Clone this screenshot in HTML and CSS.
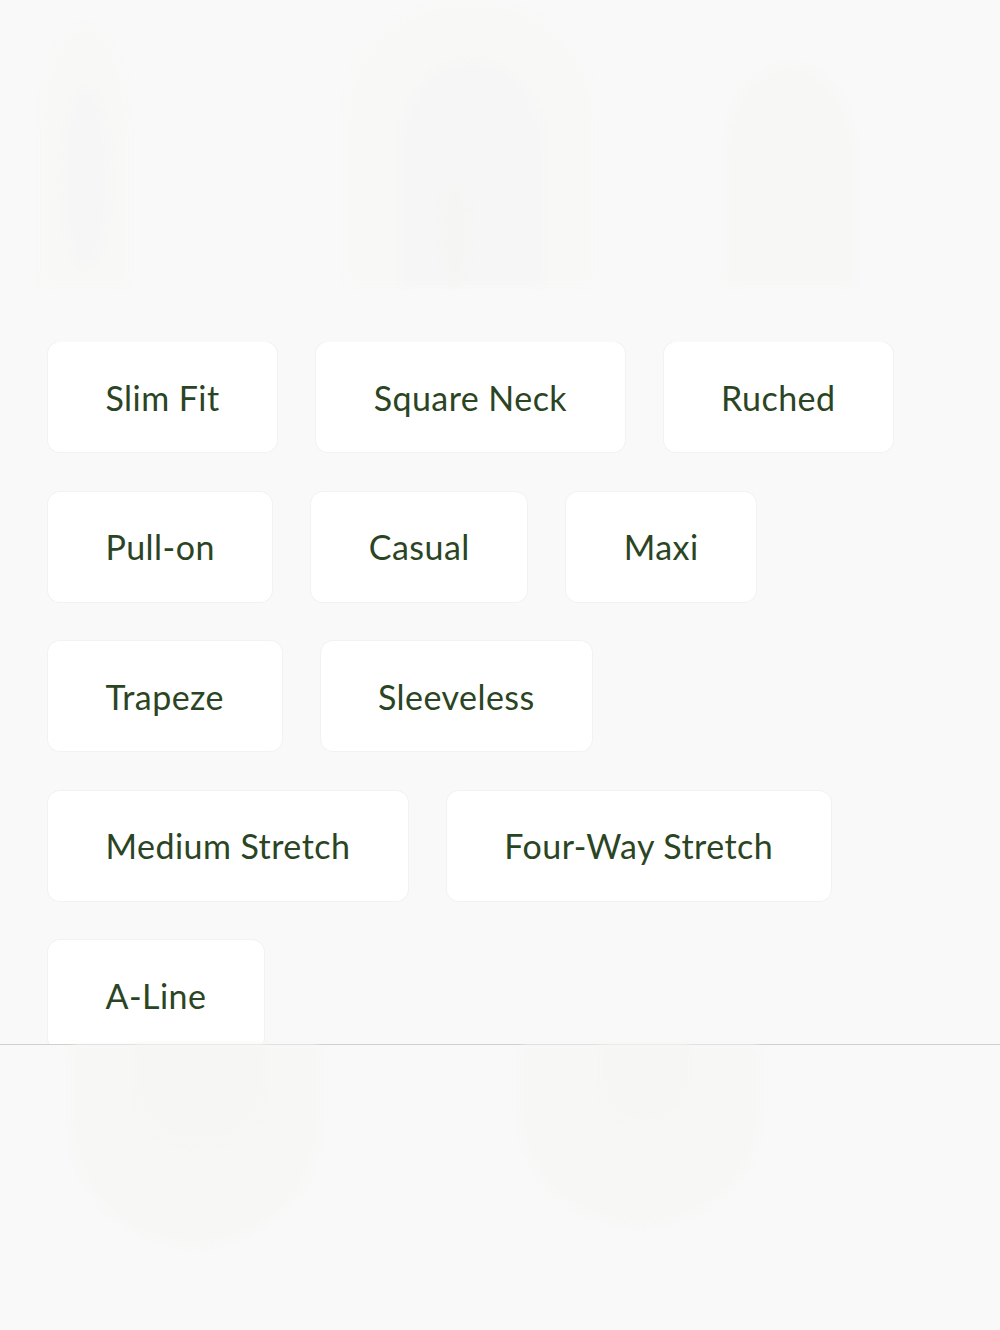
FILE: index.html
```html
<!DOCTYPE html>
<html lang="en">
<head>
<meta charset="utf-8">
<title>Attributes</title>
<link rel="stylesheet" href="styles.css">
</head>
<body>
<div class="page">
  <div class="hero">
    <div class="ghost g1"></div>
    <div class="ghost g2"></div>
    <div class="ghost g3"></div>
    <div class="ghost g4"></div>
    <div class="ghost g5"></div>
    <div class="ghost g6"></div>
  </div>
  <div class="sheet">
    <ul class="chips">
      <li class="chip">Slim Fit</li>
      <li class="chip">Square Neck</li>
      <li class="chip">Ruched</li>
      <li class="chip">Pull-on</li>
      <li class="chip">Casual</li>
      <li class="chip">Maxi</li>
      <li class="chip">Trapeze</li>
      <li class="chip">Sleeveless</li>
      <li class="chip">Medium Stretch</li>
      <li class="chip">Four-Way Stretch</li>
      <li class="chip">A-Line</li>
    </ul>
  </div>
  <div class="footer">
    <div class="ghost f1"></div>
    <div class="ghost f2"></div>
    <div class="ghost f3"></div>
    <div class="ghost f4"></div>
  </div>
</div>
</body>
</html>
```

FILE: styles.css
```css
* { box-sizing: border-box; }
html, body { margin: 0; padding: 0; }
body {
  background: #f9f9f9;
  font-family: Lato, "Open Sans", sans-serif;
}
.page {
  width: 1000px;
  height: 1330px;
  display: flex;
  flex-direction: column;
  overflow: hidden;
}
.hero {
  position: relative;
  height: 342px;
  flex: none;
}
.ghost {
  position: absolute;
  border-radius: 50% 50% 8px 8px / 40% 40% 8px 8px;
  filter: blur(3px);
}
.g1 { left: 40px; top: 25px; width: 90px; height: 260px; background: #f8f8f7; }
.g2 { left: 62px; top: 88px; width: 48px; height: 180px; background: #f6f6f6; border-radius: 50%; }
.g3 { left: 345px; top: 0; width: 250px; height: 285px; background: #f8f8f7; }
.g4 { left: 400px; top: 60px; width: 145px; height: 225px; background: #f6f6f6; }
.g5 { left: 440px; top: 180px; width: 30px; height: 105px; background: #f5f5f4; border-radius: 50%; }
.g6 { left: 725px; top: 65px; width: 130px; height: 220px; background: #f7f7f6; }
.sheet {
  height: 702px;
  flex: none;
  overflow: hidden;
  padding: 0 48px;
}
.chips {
  list-style: none;
  margin: 0;
  padding: 0;
  display: flex;
  flex-wrap: wrap;
  gap: 39.5px 39px;
}
.chip {
  height: 110px;
  padding: 0 57.5px;
  display: flex;
  align-items: center;
  background: #ffffff;
  border-radius: 12px;
  box-shadow: 0 0 0 1px #f2f2f2;
  color: #2b4524;
  font-size: 34px;
  letter-spacing: 0.45px;
  white-space: nowrap;
}
.footer {
  position: relative;
  flex: 1;
  border-top: 1px solid #cfcfcf;
}
.f1 { left: 70px; top: 0; width: 250px; height: 200px; background: #f7f7f6; border-radius: 8px 8px 50% 50% / 8px 8px 60% 60%; }
.f2 { left: 135px; top: 0; width: 130px; height: 100px; background: #f6f6f5; border-radius: 0 0 50% 50%; }
.f3 { left: 520px; top: 0; width: 240px; height: 180px; background: #f7f7f6; border-radius: 8px 8px 50% 50% / 8px 8px 60% 60%; }
.f4 { left: 600px; top: 0; width: 90px; height: 80px; background: #f6f6f5; border-radius: 0 0 50% 50%; }
```
